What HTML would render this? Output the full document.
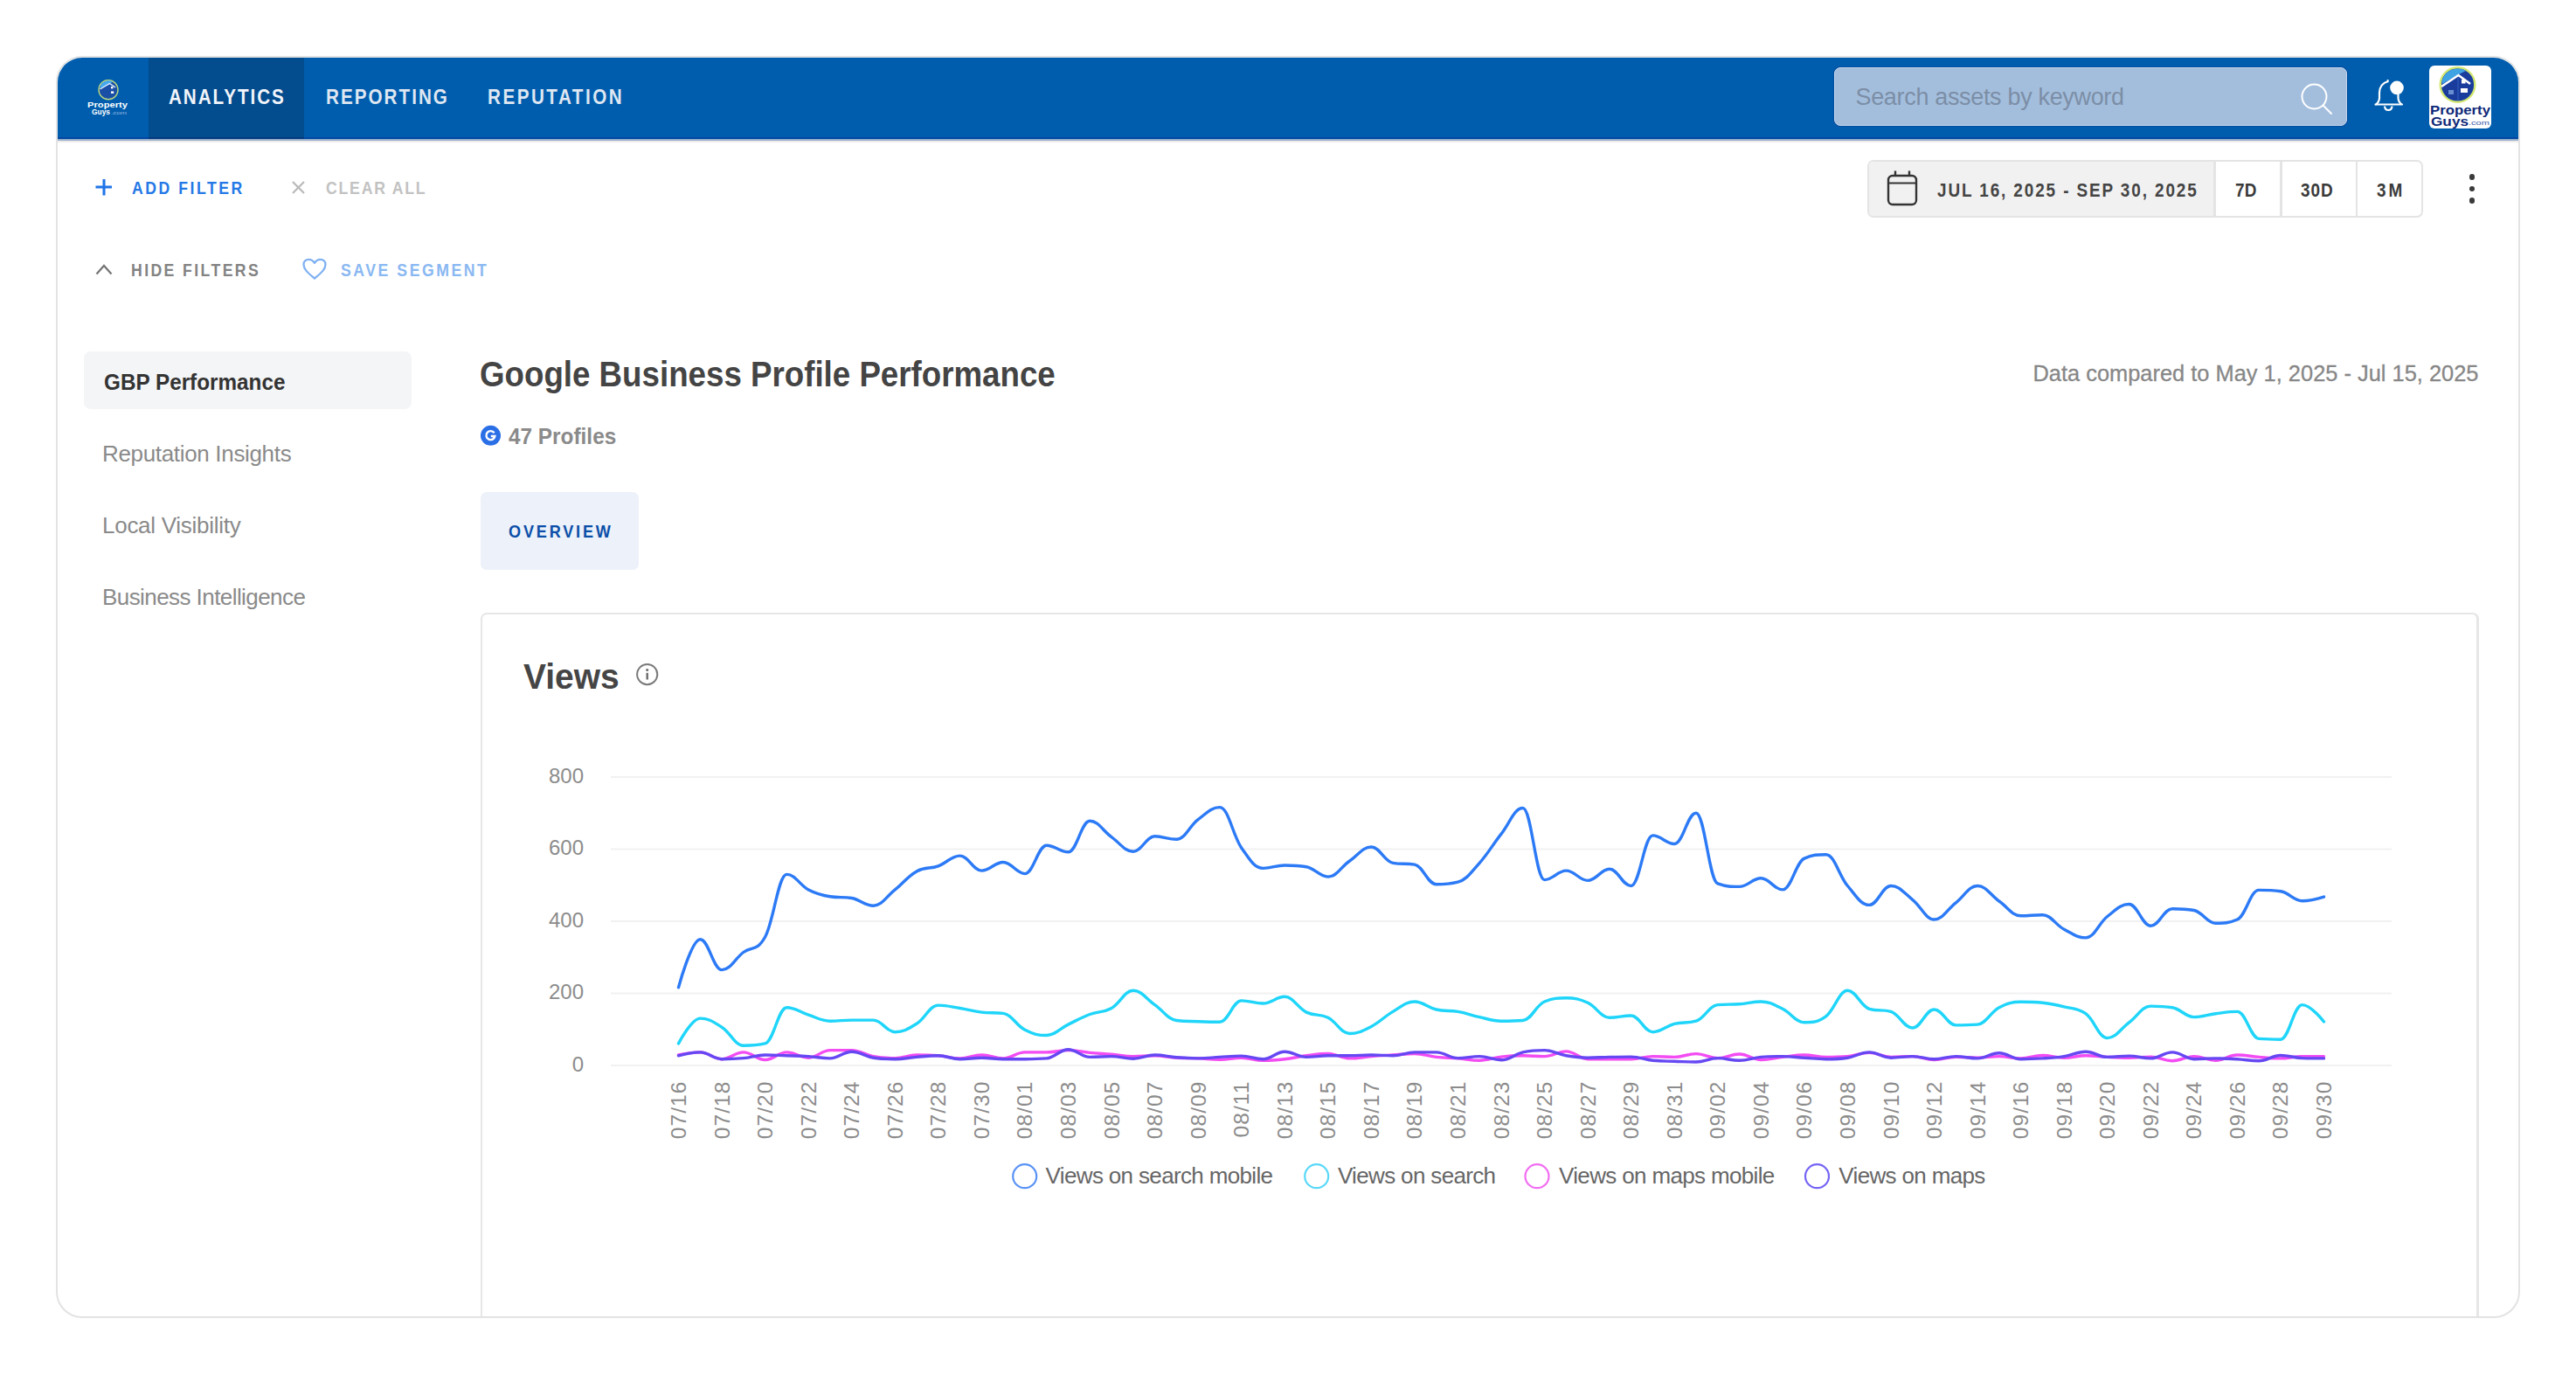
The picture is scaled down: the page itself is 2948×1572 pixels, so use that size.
<!DOCTYPE html>
<html><head><meta charset="utf-8">
<style>
html,body{margin:0;padding:0;background:#fff;}
body{width:2948px;height:1572px;overflow:hidden;position:relative;font-family:"Liberation Sans",sans-serif;}
.a{position:absolute;}
.t{position:absolute;white-space:nowrap;line-height:1;}
#card{position:absolute;left:64px;top:64px;width:2820px;height:1444px;box-sizing:border-box;border:2px solid #e3e3e3;border-radius:30px;overflow:hidden;background:#fff;}
#root{position:absolute;left:-66px;top:-66px;width:2948px;height:1572px;}
</style></head>
<body>
<div id="card"><div id="root">
<!-- NAV -->
<div class="a" style="left:60px;top:60px;width:2830px;height:99px;background:#005dad;"></div>
<div class="a" style="left:170px;top:60px;width:178px;height:99px;background:#034c8e;"></div>
<div class="a" style="left:60px;top:157px;width:2830px;height:2px;background:#0046a3;"></div>
<div class="a" style="left:170px;top:157px;width:178px;height:2px;background:#03397f;"></div>
<div class="a" style="left:60px;top:159px;width:2830px;height:2px;background:#98afc9;"></div>
<div class="a" style="left:60px;top:161px;width:2830px;height:2px;background:#efedec;"></div>
<!-- logo -->
<svg class="a" style="left:96px;top:86px" width="56" height="50" viewBox="0 0 56 50">
  <circle cx="28" cy="16.7" r="11" fill="#1a4fa6" stroke="#b9d77f" stroke-width="1.4"/>
  <path d="M18.5 13 A10.4 10.4 0 0 1 33 7.5 L29 10.5 L19 15 Z" fill="#45a8ee"/>
  <path d="M18.5 16 L29.5 9.5 L36 14" fill="none" stroke="#e8f4ff" stroke-width="1.4"/>
  <rect x="31" y="13" width="2.4" height="2.4" fill="#fff"/>
  <rect x="31" y="18.5" width="3.2" height="2.4" fill="#fff"/>
  <text x="4" y="37.2" textLength="46" lengthAdjust="spacingAndGlyphs" font-family="Liberation Sans" font-weight="bold" font-size="9.5" fill="#fff">Property</text>
  <text x="9" y="45.3" textLength="21" lengthAdjust="spacingAndGlyphs" font-family="Liberation Sans" font-weight="bold" font-size="9" fill="#fff">Guys</text>
  <text x="31" y="45" textLength="18" lengthAdjust="spacingAndGlyphs" font-family="Liberation Sans" font-size="6" fill="#9bbbe3">.com</text>
</svg>
<div id="t_analytics" class="t" style="left:192.5px;top:99.0px;font-size:24px;font-weight:bold;color:#f2f5fa;letter-spacing:2.26px;transform:scaleX(0.86);transform-origin:0 0;">ANALYTICS</div>
<div id="t_reporting" class="t" style="left:373.0px;top:99.0px;font-size:24px;font-weight:bold;color:#dfe7f2;letter-spacing:2.35px;transform:scaleX(0.86);transform-origin:0 0;">REPORTING</div>
<div id="t_reputation" class="t" style="left:558.0px;top:99.0px;font-size:24px;font-weight:bold;color:#dfe7f2;letter-spacing:2.91px;transform:scaleX(0.86);transform-origin:0 0;">REPUTATION</div>
<!-- search -->
<div class="a" style="left:2099px;top:77px;width:587px;height:67px;box-sizing:border-box;background:#a3bedd;border:1px solid #c3d4ea;border-radius:7px;box-shadow:0 0 0 1px #004b9f;"></div>
<div id="t_search" class="t" style="left:2123.5px;top:98.0px;font-size:27px;color:#7c8ea6;letter-spacing:-0.33px;">Search assets by keyword</div>
<svg class="a" style="left:2626px;top:88px" width="50" height="50" viewBox="0 0 50 50">
  <circle cx="22.5" cy="22.5" r="14" fill="none" stroke="#fff" stroke-width="2"/>
  <line x1="32.5" y1="32.5" x2="42" y2="42" stroke="#fff" stroke-width="2" stroke-linecap="round"/>
</svg>
<!-- bell -->
<svg class="a" style="left:2710px;top:86px" width="50" height="50" viewBox="0 0 50 50">
  <path d="M8.5 33.5 L39 33.5" stroke="#fff" stroke-width="2.2" stroke-linecap="round"/>
  <path d="M9 33.5 C11.5 31.5 13 29.5 13 26 L13 20 C13 13.5 17 8.5 22.6 7.2 L22.6 6" fill="none" stroke="#fff" stroke-width="2.2" stroke-linecap="round"/>
  <path d="M34.5 22 L34.5 26 C34.5 29.5 36 31.5 38.5 33.5" fill="none" stroke="#fff" stroke-width="2.2"/>
  <path d="M19 35.5 C19.5 41.5 27 41.5 27.5 35.5" fill="none" stroke="#fff" stroke-width="2.2"/>
  <circle cx="33" cy="14.4" r="7.8" fill="#fff"/>
</svg>
<!-- avatar -->
<div class="a" style="left:2780px;top:75px;width:71px;height:72px;background:#fff;border-radius:6px;overflow:hidden;">
<svg width="71" height="72" viewBox="0 0 71 72">
  <circle cx="32.5" cy="22" r="19.8" fill="#1a3d9d" stroke="#d3e872" stroke-width="2.4"/>
  <path d="M14.5 18 A18.6 18.6 0 0 1 42 6 L32 11 L15 21 Z" fill="#3fa3e4"/>
  <path d="M14 24 L33.5 11 L47 21" fill="none" stroke="#fff" stroke-width="2.6"/>
  <rect x="37" y="16" width="4.5" height="4.5" fill="#fff"/>
  <rect x="36" y="26" width="8" height="5" fill="#fff"/>
  <rect x="22" y="28" width="6" height="5" fill="#6a8fd0"/>
  <line x1="33" y1="14" x2="33" y2="40" stroke="#2a56b5" stroke-width="1.5"/>
  <text x="1" y="56" textLength="69" lengthAdjust="spacingAndGlyphs" font-family="Liberation Sans" font-weight="bold" font-size="15.5" fill="#0e2877">Property</text>
  <text x="2" y="68.5" textLength="43" lengthAdjust="spacingAndGlyphs" font-family="Liberation Sans" font-weight="bold" font-size="15.5" fill="#0e2877">Guys</text>
  <text x="45" y="68" textLength="24" lengthAdjust="spacingAndGlyphs" font-family="Liberation Sans" font-size="8" fill="#3b5aa8">.com</text>
</svg>
</div>

<!-- plus -->
<svg class="a" style="left:105px;top:200px" width="28" height="28" viewBox="0 0 28 28">
  <line x1="14" y1="5" x2="14" y2="23.5" stroke="#1f74e8" stroke-width="3"/>
  <line x1="4.5" y1="14" x2="23" y2="14" stroke="#1f74e8" stroke-width="3"/>
</svg>
<div id="t_addfilter" class="t" style="left:151.0px;top:205.0px;font-size:20.5px;font-weight:bold;color:#2478e6;letter-spacing:2.95px;transform:scaleX(0.86);transform-origin:0 0;">ADD FILTER</div>
<svg class="a" style="left:330px;top:203px" width="24" height="24" viewBox="0 0 24 24">
  <line x1="5" y1="5" x2="18" y2="18" stroke="#b9b9b9" stroke-width="2.2"/>
  <line x1="18" y1="5" x2="5" y2="18" stroke="#b9b9b9" stroke-width="2.2"/>
</svg>
<div id="t_clearall" class="t" style="left:373.0px;top:205.0px;font-size:20.5px;font-weight:bold;color:#c2c2c2;letter-spacing:2.09px;transform:scaleX(0.86);transform-origin:0 0;">CLEAR ALL</div>
<!-- chevron -->
<svg class="a" style="left:105px;top:296px" width="28" height="24" viewBox="0 0 28 24">
  <path d="M5.5 17.5 L14 8 L22.5 17.5" fill="none" stroke="#747474" stroke-width="2.2"/>
</svg>
<div id="t_hidefilters" class="t" style="left:150.0px;top:298.5px;font-size:20.5px;font-weight:bold;color:#838383;letter-spacing:2.81px;transform:scaleX(0.86);transform-origin:0 0;">HIDE FILTERS</div>
<!-- heart -->
<svg class="a" style="left:342px;top:292px" width="36" height="32" viewBox="0 0 36 32">
  <path d="M18 26.5 C10 20 5.5 16 5.5 10.5 C5.5 7 8 4.8 11.5 4.8 C14.5 4.8 16.5 6.5 18 8.8 C19.5 6.5 21.5 4.8 24.5 4.8 C28 4.8 30.5 7 30.5 10.5 C30.5 16 26 20 18 26.5 Z" fill="none" stroke="#7eb0f2" stroke-width="2.3" stroke-linejoin="round"/>
</svg>
<div id="t_savesegment" class="t" style="left:390.0px;top:298.5px;font-size:20.5px;font-weight:bold;color:#8ab8f2;letter-spacing:2.96px;transform:scaleX(0.86);transform-origin:0 0;">SAVE SEGMENT</div>
<!-- date group -->
<div class="a" style="left:2137px;top:183px;width:636px;height:66px;box-sizing:border-box;border:2px solid #e4e4e4;border-radius:7px;background:#fff;overflow:hidden;">
  <div class="a" style="left:0;top:0;width:394px;height:62px;background:#f1f1f1;"></div>
  <div class="a" style="left:394px;top:0;width:3px;height:62px;background:#e4e4e4;"></div>
  <div class="a" style="left:470px;top:0;width:3px;height:62px;background:#e4e4e4;"></div>
  <div class="a" style="left:557px;top:0;width:2px;height:62px;background:#e4e4e4;"></div>
</div>
<svg class="a" style="left:2155px;top:190px" width="44" height="50" viewBox="0 0 44 50">
  <rect x="6" y="11" width="32" height="33" rx="5" fill="none" stroke="#333" stroke-width="2.4"/>
  <line x1="6" y1="19.5" x2="38" y2="19.5" stroke="#333" stroke-width="2.2"/>
  <line x1="14" y1="5.5" x2="14" y2="11" stroke="#333" stroke-width="2.4"/>
  <line x1="30" y1="5.5" x2="30" y2="11" stroke="#333" stroke-width="2.4"/>
</svg>
<div id="t_date" class="t" style="left:2216.5px;top:206.5px;font-size:22px;font-weight:bold;color:#444;letter-spacing:2.20px;transform:scaleX(0.86);transform-origin:0 0;">JUL 16, 2025 - SEP 30, 2025</div>
<div id="t_7d" class="t" style="left:2558.0px;top:206.5px;font-size:22px;letter-spacing:0.24px;font-weight:bold;color:#3a3a3a;transform:scaleX(0.86);transform-origin:0 0;">7D</div>
<div id="t_30d" class="t" style="left:2633.0px;top:206.5px;font-size:22px;letter-spacing:1.16px;font-weight:bold;color:#3a3a3a;transform:scaleX(0.86);transform-origin:0 0;">30D</div>
<div id="t_3m" class="t" style="left:2719.5px;top:206.5px;font-size:22px;letter-spacing:3.37px;font-weight:bold;color:#3a3a3a;transform:scaleX(0.86);transform-origin:0 0;">3M</div>
<div class="a" style="left:2825.5px;top:199px;width:6.6px;height:6.6px;border-radius:50%;background:#3a3a3a;"></div>
<div class="a" style="left:2825.5px;top:212.8px;width:6.6px;height:6.6px;border-radius:50%;background:#3a3a3a;"></div>
<div class="a" style="left:2825.5px;top:226.1px;width:6.6px;height:6.6px;border-radius:50%;background:#3a3a3a;"></div>

<div class="a" style="left:96px;top:402px;width:375px;height:66px;background:#f4f5f7;border-radius:8px;"></div>
<div id="t_gbp" class="t" style="left:119.0px;top:424.0px;font-size:26px;font-weight:bold;color:#333;transform:scaleX(0.9340);transform-origin:0 0;">GBP Performance</div>
<div id="t_repins" class="t" style="left:117.0px;top:506.0px;font-size:26px;color:#8a8a8a;letter-spacing:-0.33px;">Reputation Insights</div>
<div id="t_localvis" class="t" style="left:117.0px;top:587.5px;font-size:26px;color:#8a8a8a;letter-spacing:-0.27px;">Local Visibility</div>
<div id="t_busint" class="t" style="left:117.0px;top:670.0px;font-size:26px;color:#8a8a8a;letter-spacing:-0.57px;">Business Intelligence</div>

<div id="t_title" class="t" style="left:548.5px;top:407.5px;font-size:40.5px;font-weight:bold;color:#444;transform:scaleX(0.9062);transform-origin:0 0;">Google Business Profile Performance</div>
<div id="t_compared" class="t" style="left:2326.5px;top:414.5px;font-size:25.4px;color:#878787;-webkit-text-stroke-width:0.3px;letter-spacing:0.01px;">Data compared to May 1, 2025 - Jul 15, 2025</div>
<svg class="a" style="left:549px;top:486px" width="25" height="25" viewBox="0 0 25 25">
  <circle cx="12.5" cy="12.3" r="11.5" fill="#2a6fe6"/>
  <path d="M16.6 9.3 A5 5 0 1 0 17.4 13 L12.8 13" fill="none" stroke="#fff" stroke-width="2.4"/>
</svg>
<div id="t_profiles" class="t" style="left:581.5px;top:486.0px;font-size:26.5px;font-weight:bold;color:#8a8a8a;transform:scaleX(0.9193);transform-origin:0 0;">47 Profiles</div>
<div class="a" style="left:550px;top:563px;width:181px;height:89px;background:#ecf1fa;border-radius:7px;"></div>
<div id="t_overview" class="t" style="left:581.5px;top:597.0px;font-size:21px;font-weight:bold;color:#0b4fa8;letter-spacing:3.29px;transform:scaleX(0.86);transform-origin:0 0;">OVERVIEW</div>
<!-- chart card -->
<div class="a" style="left:550px;top:701px;width:2287px;height:820px;box-sizing:border-box;border:2px solid #e6e6e6;border-right-width:3px;border-radius:7px;"></div>
<div id="t_views" class="t" style="left:599.0px;top:754.0px;font-size:40px;font-weight:bold;color:#454545;transform:scaleX(0.9736);transform-origin:0 0;">Views</div>
<svg class="a" style="left:726px;top:757px" width="30" height="30" viewBox="0 0 30 30">
  <circle cx="14.7" cy="14.6" r="11.6" fill="none" stroke="#7a7a7a" stroke-width="2"/>
  <circle cx="14.7" cy="9.4" r="1.5" fill="#6a6a6a"/>
  <line x1="14.7" y1="12.8" x2="14.7" y2="20.5" stroke="#6a6a6a" stroke-width="2.4"/>
</svg>

<svg class="a" style="left:0;top:0" width="2948" height="1572" viewBox="0 0 2948 1572">
<line x1="699" y1="889.0" x2="2737" y2="889.0" stroke="#f1f1f1" stroke-width="2"/>
<line x1="699" y1="971.5" x2="2737" y2="971.5" stroke="#f1f1f1" stroke-width="2"/>
<line x1="699" y1="1054.0" x2="2737" y2="1054.0" stroke="#f1f1f1" stroke-width="2"/>
<line x1="699" y1="1136.5" x2="2737" y2="1136.5" stroke="#f1f1f1" stroke-width="2"/>
<line x1="699" y1="1219.0" x2="2737" y2="1219.0" stroke="#f1f1f1" stroke-width="2"/>
<text x="668" y="895.5" text-anchor="end" font-family="Liberation Sans" font-size="24" fill="#8c8c8c">800</text>
<text x="668" y="978.0" text-anchor="end" font-family="Liberation Sans" font-size="24" fill="#8c8c8c">600</text>
<text x="668" y="1060.5" text-anchor="end" font-family="Liberation Sans" font-size="24" fill="#8c8c8c">400</text>
<text x="668" y="1143.0" text-anchor="end" font-family="Liberation Sans" font-size="24" fill="#8c8c8c">200</text>
<text x="668" y="1225.5" text-anchor="end" font-family="Liberation Sans" font-size="24" fill="#8c8c8c">0</text>
<text transform="translate(776.5 1236.5) rotate(-90)" x="0" y="8.5" text-anchor="end" font-family="Liberation Sans" font-size="24.5" letter-spacing="1.1" fill="#8c8c8c">07/16</text>
<text transform="translate(826.1 1236.5) rotate(-90)" x="0" y="8.5" text-anchor="end" font-family="Liberation Sans" font-size="24.5" letter-spacing="1.1" fill="#8c8c8c">07/18</text>
<text transform="translate(875.6 1236.5) rotate(-90)" x="0" y="8.5" text-anchor="end" font-family="Liberation Sans" font-size="24.5" letter-spacing="1.1" fill="#8c8c8c">07/20</text>
<text transform="translate(925.2 1236.5) rotate(-90)" x="0" y="8.5" text-anchor="end" font-family="Liberation Sans" font-size="24.5" letter-spacing="1.1" fill="#8c8c8c">07/22</text>
<text transform="translate(974.7 1236.5) rotate(-90)" x="0" y="8.5" text-anchor="end" font-family="Liberation Sans" font-size="24.5" letter-spacing="1.1" fill="#8c8c8c">07/24</text>
<text transform="translate(1024.3 1236.5) rotate(-90)" x="0" y="8.5" text-anchor="end" font-family="Liberation Sans" font-size="24.5" letter-spacing="1.1" fill="#8c8c8c">07/26</text>
<text transform="translate(1073.8 1236.5) rotate(-90)" x="0" y="8.5" text-anchor="end" font-family="Liberation Sans" font-size="24.5" letter-spacing="1.1" fill="#8c8c8c">07/28</text>
<text transform="translate(1123.4 1236.5) rotate(-90)" x="0" y="8.5" text-anchor="end" font-family="Liberation Sans" font-size="24.5" letter-spacing="1.1" fill="#8c8c8c">07/30</text>
<text transform="translate(1172.9 1236.5) rotate(-90)" x="0" y="8.5" text-anchor="end" font-family="Liberation Sans" font-size="24.5" letter-spacing="1.1" fill="#8c8c8c">08/01</text>
<text transform="translate(1222.5 1236.5) rotate(-90)" x="0" y="8.5" text-anchor="end" font-family="Liberation Sans" font-size="24.5" letter-spacing="1.1" fill="#8c8c8c">08/03</text>
<text transform="translate(1272.0 1236.5) rotate(-90)" x="0" y="8.5" text-anchor="end" font-family="Liberation Sans" font-size="24.5" letter-spacing="1.1" fill="#8c8c8c">08/05</text>
<text transform="translate(1321.6 1236.5) rotate(-90)" x="0" y="8.5" text-anchor="end" font-family="Liberation Sans" font-size="24.5" letter-spacing="1.1" fill="#8c8c8c">08/07</text>
<text transform="translate(1371.1 1236.5) rotate(-90)" x="0" y="8.5" text-anchor="end" font-family="Liberation Sans" font-size="24.5" letter-spacing="1.1" fill="#8c8c8c">08/09</text>
<text transform="translate(1420.7 1236.5) rotate(-90)" x="0" y="8.5" text-anchor="end" font-family="Liberation Sans" font-size="24.5" letter-spacing="1.1" fill="#8c8c8c">08/11</text>
<text transform="translate(1470.2 1236.5) rotate(-90)" x="0" y="8.5" text-anchor="end" font-family="Liberation Sans" font-size="24.5" letter-spacing="1.1" fill="#8c8c8c">08/13</text>
<text transform="translate(1519.8 1236.5) rotate(-90)" x="0" y="8.5" text-anchor="end" font-family="Liberation Sans" font-size="24.5" letter-spacing="1.1" fill="#8c8c8c">08/15</text>
<text transform="translate(1569.3 1236.5) rotate(-90)" x="0" y="8.5" text-anchor="end" font-family="Liberation Sans" font-size="24.5" letter-spacing="1.1" fill="#8c8c8c">08/17</text>
<text transform="translate(1618.9 1236.5) rotate(-90)" x="0" y="8.5" text-anchor="end" font-family="Liberation Sans" font-size="24.5" letter-spacing="1.1" fill="#8c8c8c">08/19</text>
<text transform="translate(1668.4 1236.5) rotate(-90)" x="0" y="8.5" text-anchor="end" font-family="Liberation Sans" font-size="24.5" letter-spacing="1.1" fill="#8c8c8c">08/21</text>
<text transform="translate(1718.0 1236.5) rotate(-90)" x="0" y="8.5" text-anchor="end" font-family="Liberation Sans" font-size="24.5" letter-spacing="1.1" fill="#8c8c8c">08/23</text>
<text transform="translate(1767.5 1236.5) rotate(-90)" x="0" y="8.5" text-anchor="end" font-family="Liberation Sans" font-size="24.5" letter-spacing="1.1" fill="#8c8c8c">08/25</text>
<text transform="translate(1817.1 1236.5) rotate(-90)" x="0" y="8.5" text-anchor="end" font-family="Liberation Sans" font-size="24.5" letter-spacing="1.1" fill="#8c8c8c">08/27</text>
<text transform="translate(1866.6 1236.5) rotate(-90)" x="0" y="8.5" text-anchor="end" font-family="Liberation Sans" font-size="24.5" letter-spacing="1.1" fill="#8c8c8c">08/29</text>
<text transform="translate(1916.2 1236.5) rotate(-90)" x="0" y="8.5" text-anchor="end" font-family="Liberation Sans" font-size="24.5" letter-spacing="1.1" fill="#8c8c8c">08/31</text>
<text transform="translate(1965.7 1236.5) rotate(-90)" x="0" y="8.5" text-anchor="end" font-family="Liberation Sans" font-size="24.5" letter-spacing="1.1" fill="#8c8c8c">09/02</text>
<text transform="translate(2015.3 1236.5) rotate(-90)" x="0" y="8.5" text-anchor="end" font-family="Liberation Sans" font-size="24.5" letter-spacing="1.1" fill="#8c8c8c">09/04</text>
<text transform="translate(2064.9 1236.5) rotate(-90)" x="0" y="8.5" text-anchor="end" font-family="Liberation Sans" font-size="24.5" letter-spacing="1.1" fill="#8c8c8c">09/06</text>
<text transform="translate(2114.4 1236.5) rotate(-90)" x="0" y="8.5" text-anchor="end" font-family="Liberation Sans" font-size="24.5" letter-spacing="1.1" fill="#8c8c8c">09/08</text>
<text transform="translate(2164.0 1236.5) rotate(-90)" x="0" y="8.5" text-anchor="end" font-family="Liberation Sans" font-size="24.5" letter-spacing="1.1" fill="#8c8c8c">09/10</text>
<text transform="translate(2213.5 1236.5) rotate(-90)" x="0" y="8.5" text-anchor="end" font-family="Liberation Sans" font-size="24.5" letter-spacing="1.1" fill="#8c8c8c">09/12</text>
<text transform="translate(2263.1 1236.5) rotate(-90)" x="0" y="8.5" text-anchor="end" font-family="Liberation Sans" font-size="24.5" letter-spacing="1.1" fill="#8c8c8c">09/14</text>
<text transform="translate(2312.6 1236.5) rotate(-90)" x="0" y="8.5" text-anchor="end" font-family="Liberation Sans" font-size="24.5" letter-spacing="1.1" fill="#8c8c8c">09/16</text>
<text transform="translate(2362.2 1236.5) rotate(-90)" x="0" y="8.5" text-anchor="end" font-family="Liberation Sans" font-size="24.5" letter-spacing="1.1" fill="#8c8c8c">09/18</text>
<text transform="translate(2411.7 1236.5) rotate(-90)" x="0" y="8.5" text-anchor="end" font-family="Liberation Sans" font-size="24.5" letter-spacing="1.1" fill="#8c8c8c">09/20</text>
<text transform="translate(2461.3 1236.5) rotate(-90)" x="0" y="8.5" text-anchor="end" font-family="Liberation Sans" font-size="24.5" letter-spacing="1.1" fill="#8c8c8c">09/22</text>
<text transform="translate(2510.8 1236.5) rotate(-90)" x="0" y="8.5" text-anchor="end" font-family="Liberation Sans" font-size="24.5" letter-spacing="1.1" fill="#8c8c8c">09/24</text>
<text transform="translate(2560.4 1236.5) rotate(-90)" x="0" y="8.5" text-anchor="end" font-family="Liberation Sans" font-size="24.5" letter-spacing="1.1" fill="#8c8c8c">09/26</text>
<text transform="translate(2609.9 1236.5) rotate(-90)" x="0" y="8.5" text-anchor="end" font-family="Liberation Sans" font-size="24.5" letter-spacing="1.1" fill="#8c8c8c">09/28</text>
<text transform="translate(2659.5 1236.5) rotate(-90)" x="0" y="8.5" text-anchor="end" font-family="Liberation Sans" font-size="24.5" letter-spacing="1.1" fill="#8c8c8c">09/30</text>
<path d="M776.5 1207.0 C776.5 1207.0 791.4 1203.9 801.3 1203.9 C811.2 1203.9 816.1 1211.7 826.1 1211.7 C836.0 1211.7 840.9 1203.9 850.8 1203.9 C860.7 1203.9 865.7 1212.5 875.6 1212.5 C885.5 1212.5 890.5 1203.9 900.4 1203.9 C910.3 1203.9 915.2 1210.2 925.2 1210.2 C935.1 1210.2 940.0 1201.6 949.9 1201.6 C959.8 1201.6 964.8 1201.6 974.7 1201.6 C984.6 1201.6 989.6 1206.8 999.5 1208.6 C1009.4 1210.4 1014.3 1210.6 1024.3 1210.6 C1034.2 1210.6 1039.1 1207.0 1049.0 1207.0 C1058.9 1207.0 1063.9 1207.0 1073.8 1207.8 C1083.7 1208.6 1088.7 1210.9 1098.6 1210.9 C1108.5 1210.9 1113.5 1207.0 1123.4 1207.0 C1133.3 1207.0 1138.2 1210.9 1148.1 1210.9 C1158.1 1210.9 1163.0 1203.9 1172.9 1203.9 C1182.8 1203.9 1187.8 1203.9 1197.7 1203.9 C1207.6 1203.9 1212.6 1201.6 1222.5 1201.6 C1232.4 1201.6 1237.3 1203.5 1247.2 1204.4 C1257.2 1205.3 1262.1 1205.5 1272.0 1206.3 C1281.9 1207.1 1286.9 1208.6 1296.8 1208.6 C1306.7 1208.6 1311.7 1207.8 1321.6 1207.8 C1331.5 1207.8 1336.4 1209.6 1346.3 1210.2 C1356.3 1210.8 1361.2 1210.5 1371.1 1210.9 C1381.0 1211.3 1386.0 1212.2 1395.9 1212.2 C1405.8 1212.2 1410.8 1210.2 1420.7 1210.2 C1430.6 1210.2 1435.5 1213.3 1445.5 1213.3 C1455.4 1213.3 1460.3 1212.8 1470.2 1211.7 C1480.1 1210.6 1485.1 1209.0 1495.0 1207.8 C1504.9 1206.6 1509.9 1205.5 1519.8 1205.5 C1529.7 1205.5 1534.6 1210.9 1544.6 1210.9 C1554.5 1210.9 1559.4 1209.4 1569.3 1208.6 C1579.2 1207.8 1584.2 1207.6 1594.1 1207.0 C1604.0 1206.4 1609.0 1205.5 1618.9 1205.5 C1628.8 1205.5 1633.7 1208.3 1643.7 1209.4 C1653.6 1210.5 1658.5 1210.1 1668.4 1210.9 C1678.3 1211.7 1683.3 1213.3 1693.2 1213.3 C1703.1 1213.3 1708.1 1210.2 1718.0 1209.1 C1727.9 1208.0 1732.9 1207.8 1742.8 1207.8 C1752.7 1207.8 1757.6 1208.6 1767.5 1208.6 C1777.5 1208.6 1782.4 1202.9 1792.3 1202.9 C1802.2 1202.9 1807.2 1211.7 1817.1 1211.7 C1827.0 1211.7 1832.0 1211.7 1841.9 1211.7 C1851.8 1211.7 1856.7 1211.7 1866.6 1211.7 C1876.6 1211.7 1881.5 1208.6 1891.4 1208.6 C1901.3 1208.6 1906.3 1209.4 1916.2 1209.4 C1926.1 1209.4 1931.1 1205.6 1941.0 1205.6 C1950.9 1205.6 1955.8 1210.6 1965.7 1210.6 C1975.7 1210.6 1980.6 1206.0 1990.5 1206.0 C2000.4 1206.0 2005.4 1212.5 2015.3 1212.5 C2025.2 1212.5 2030.2 1210.5 2040.1 1209.4 C2050.0 1208.3 2054.9 1207.0 2064.9 1207.0 C2074.8 1207.0 2079.7 1209.4 2089.6 1209.4 C2099.5 1209.4 2104.5 1209.4 2114.4 1208.6 C2124.3 1207.8 2129.3 1204.4 2139.2 1204.4 C2149.1 1204.4 2154.0 1209.4 2164.0 1209.4 C2173.9 1209.4 2178.8 1208.6 2188.7 1208.6 C2198.6 1208.6 2203.6 1212.5 2213.5 1212.5 C2223.4 1212.5 2228.4 1209.4 2238.3 1209.4 C2248.2 1209.4 2253.1 1210.2 2263.1 1210.2 C2273.0 1210.2 2277.9 1208.6 2287.8 1208.6 C2297.7 1208.6 2302.7 1211.0 2312.6 1211.0 C2322.5 1211.0 2327.5 1207.5 2337.4 1207.5 C2347.3 1207.5 2352.3 1210.2 2362.2 1210.2 C2372.1 1210.2 2377.0 1207.8 2386.9 1207.8 C2396.9 1207.8 2401.8 1208.9 2411.7 1209.4 C2421.6 1209.9 2426.6 1210.2 2436.5 1210.2 C2446.4 1210.2 2451.4 1209.1 2461.3 1209.1 C2471.2 1209.1 2476.1 1213.7 2486.0 1213.7 C2496.0 1213.7 2500.9 1208.6 2510.8 1208.6 C2520.7 1208.6 2525.7 1213.3 2535.6 1213.3 C2545.5 1213.3 2550.5 1207.0 2560.4 1207.0 C2570.3 1207.0 2575.2 1208.6 2585.1 1209.4 C2595.1 1210.2 2600.0 1210.9 2609.9 1210.9 C2619.8 1210.9 2624.8 1208.6 2634.7 1208.6 C2644.6 1208.6 2659.5 1208.6 2659.5 1208.6" fill="none" stroke="#f24cf2" stroke-width="3.4" stroke-linejoin="round" stroke-linecap="round"/>
<path d="M776.5 1207.8 C776.5 1207.8 791.4 1203.9 801.3 1203.9 C811.2 1203.9 816.1 1211.7 826.1 1211.7 C836.0 1211.7 840.9 1211.5 850.8 1210.6 C860.7 1209.7 865.7 1207.0 875.6 1207.0 C885.5 1207.0 890.5 1207.5 900.4 1207.8 C910.3 1208.1 915.2 1208.0 925.2 1208.6 C935.1 1209.2 940.0 1210.9 949.9 1210.9 C959.8 1210.9 964.8 1203.2 974.7 1203.2 C984.6 1203.2 989.6 1208.7 999.5 1210.2 C1009.4 1211.7 1014.3 1211.7 1024.3 1211.7 C1034.2 1211.7 1039.1 1210.2 1049.0 1209.4 C1058.9 1208.6 1063.9 1207.8 1073.8 1207.8 C1083.7 1207.8 1088.7 1211.7 1098.6 1211.7 C1108.5 1211.7 1113.5 1210.2 1123.4 1210.2 C1133.3 1210.2 1138.2 1211.7 1148.1 1211.7 C1158.1 1211.7 1163.0 1211.7 1172.9 1211.7 C1182.8 1211.7 1187.8 1211.7 1197.7 1210.9 C1207.6 1210.1 1212.6 1200.8 1222.5 1200.8 C1232.4 1200.8 1237.3 1209.4 1247.2 1209.4 C1257.2 1209.4 1262.1 1208.6 1272.0 1208.6 C1281.9 1208.6 1286.9 1211.2 1296.8 1211.2 C1306.7 1211.2 1311.7 1207.0 1321.6 1207.0 C1331.5 1207.0 1336.4 1209.0 1346.3 1209.8 C1356.3 1210.6 1361.2 1210.9 1371.1 1210.9 C1381.0 1210.9 1386.0 1210.0 1395.9 1209.4 C1405.8 1208.8 1410.8 1208.1 1420.7 1208.1 C1430.6 1208.1 1435.5 1211.7 1445.5 1211.7 C1455.4 1211.7 1460.3 1203.2 1470.2 1203.2 C1480.1 1203.2 1485.1 1209.4 1495.0 1209.4 C1504.9 1209.4 1509.9 1207.8 1519.8 1207.8 C1529.7 1207.8 1534.6 1207.8 1544.6 1207.8 C1554.5 1207.8 1559.4 1207.0 1569.3 1207.0 C1579.2 1207.0 1584.2 1207.8 1594.1 1207.8 C1604.0 1207.8 1609.0 1203.9 1618.9 1203.9 C1628.8 1203.9 1633.7 1203.9 1643.7 1203.9 C1653.6 1203.9 1658.5 1210.6 1668.4 1210.6 C1678.3 1210.6 1683.3 1208.6 1693.2 1208.6 C1703.1 1208.6 1708.1 1212.8 1718.0 1212.8 C1727.9 1212.8 1732.9 1206.1 1742.8 1203.9 C1752.7 1201.7 1757.6 1201.6 1767.5 1201.6 C1777.5 1201.6 1782.4 1206.1 1792.3 1207.8 C1802.2 1209.5 1807.2 1210.2 1817.1 1210.2 C1827.0 1210.2 1832.0 1209.6 1841.9 1209.4 C1851.8 1209.2 1856.7 1209.1 1866.6 1209.1 C1876.6 1209.1 1881.5 1212.3 1891.4 1213.3 C1901.3 1214.3 1906.3 1214.0 1916.2 1214.3 C1926.1 1214.6 1931.1 1215.0 1941.0 1215.0 C1950.9 1215.0 1955.8 1210.6 1965.7 1210.6 C1975.7 1210.6 1980.6 1213.3 1990.5 1213.3 C2000.4 1213.3 2005.4 1210.2 2015.3 1209.4 C2025.2 1208.6 2030.2 1208.6 2040.1 1208.6 C2050.0 1208.6 2054.9 1209.6 2064.9 1210.2 C2074.8 1210.8 2079.7 1211.7 2089.6 1211.7 C2099.5 1211.7 2104.5 1211.7 2114.4 1210.2 C2124.3 1208.7 2129.3 1203.9 2139.2 1203.9 C2149.1 1203.9 2154.0 1210.2 2164.0 1210.2 C2173.9 1210.2 2178.8 1208.6 2188.7 1208.6 C2198.6 1208.6 2203.6 1211.7 2213.5 1211.7 C2223.4 1211.7 2228.4 1208.6 2238.3 1208.6 C2248.2 1208.6 2253.1 1210.9 2263.1 1210.9 C2273.0 1210.9 2277.9 1204.7 2287.8 1204.7 C2297.7 1204.7 2302.7 1211.7 2312.6 1211.7 C2322.5 1211.7 2327.5 1211.5 2337.4 1210.9 C2347.3 1210.3 2352.3 1210.1 2362.2 1208.6 C2372.1 1207.1 2377.0 1203.2 2386.9 1203.2 C2396.9 1203.2 2401.8 1209.4 2411.7 1209.4 C2421.6 1209.4 2426.6 1208.1 2436.5 1208.1 C2446.4 1208.1 2451.4 1210.9 2461.3 1210.9 C2471.2 1210.9 2476.1 1203.9 2486.0 1203.9 C2496.0 1203.9 2500.9 1211.7 2510.8 1211.7 C2520.7 1211.7 2525.7 1210.9 2535.6 1210.9 C2545.5 1210.9 2550.5 1211.1 2560.4 1211.7 C2570.3 1212.3 2575.2 1213.7 2585.1 1213.7 C2595.1 1213.7 2600.0 1207.5 2609.9 1207.5 C2619.8 1207.5 2624.8 1210.3 2634.7 1210.6 C2644.6 1210.9 2659.5 1210.9 2659.5 1210.9" fill="none" stroke="#6648f3" stroke-width="3.4" stroke-linejoin="round" stroke-linecap="round"/>
<path d="M776.5 1193.9 C776.5 1193.9 791.4 1165.1 801.3 1165.1 C811.2 1165.1 816.1 1169.0 826.1 1175.2 C836.0 1181.4 840.9 1196.2 850.8 1196.2 C860.7 1196.2 865.7 1196.2 875.6 1193.9 C885.5 1191.6 890.5 1152.7 900.4 1152.7 C910.3 1152.7 915.2 1158.1 925.2 1161.2 C935.1 1164.3 940.0 1168.2 949.9 1168.2 C959.8 1168.2 964.8 1167.1 974.7 1167.1 C984.6 1167.1 989.6 1167.1 999.5 1167.1 C1009.4 1167.1 1014.3 1180.7 1024.3 1180.7 C1034.2 1180.7 1039.1 1177.4 1049.0 1171.3 C1058.9 1165.2 1063.9 1150.1 1073.8 1150.1 C1083.7 1150.1 1088.7 1151.9 1098.6 1153.5 C1108.5 1155.1 1113.5 1156.9 1123.4 1158.1 C1133.3 1159.3 1138.2 1158.1 1148.1 1159.4 C1158.1 1160.7 1163.0 1173.3 1172.9 1178.3 C1182.8 1183.3 1187.8 1184.5 1197.7 1184.5 C1207.6 1184.5 1212.6 1176.9 1222.5 1172.1 C1232.4 1167.3 1237.3 1164.2 1247.2 1160.5 C1257.2 1156.8 1262.1 1158.9 1272.0 1153.5 C1281.9 1148.1 1286.9 1133.3 1296.8 1133.3 C1306.7 1133.3 1311.7 1142.8 1321.6 1149.6 C1331.5 1156.4 1336.4 1166.3 1346.3 1167.5 C1356.3 1168.7 1361.2 1168.3 1371.1 1168.7 C1381.0 1169.1 1386.0 1169.3 1395.9 1169.3 C1405.8 1169.3 1410.8 1144.9 1420.7 1144.9 C1430.6 1144.9 1435.5 1148.0 1445.5 1148.0 C1455.4 1148.0 1460.3 1140.3 1470.2 1140.3 C1480.1 1140.3 1485.1 1153.3 1495.0 1158.1 C1504.9 1162.9 1509.9 1159.4 1519.8 1164.3 C1529.7 1169.2 1534.6 1182.5 1544.6 1182.5 C1554.5 1182.5 1559.4 1179.4 1569.3 1174.4 C1579.2 1169.4 1584.2 1163.1 1594.1 1157.4 C1604.0 1151.7 1609.0 1146.0 1618.9 1146.0 C1628.8 1146.0 1633.7 1152.7 1643.7 1155.0 C1653.6 1157.3 1658.5 1155.7 1668.4 1157.4 C1678.3 1159.1 1683.3 1161.4 1693.2 1163.6 C1703.1 1165.8 1708.1 1168.2 1718.0 1168.2 C1727.9 1168.2 1732.9 1168.2 1742.8 1167.5 C1752.7 1166.8 1757.6 1150.2 1767.5 1146.0 C1777.5 1141.8 1782.4 1141.8 1792.3 1141.8 C1802.2 1141.8 1807.2 1142.8 1817.1 1147.3 C1827.0 1151.8 1832.0 1164.3 1841.9 1164.3 C1851.8 1164.3 1856.7 1162.0 1866.6 1162.0 C1876.6 1162.0 1881.5 1180.7 1891.4 1180.7 C1901.3 1180.7 1906.3 1173.8 1916.2 1171.3 C1926.1 1168.8 1931.1 1171.3 1941.0 1168.2 C1950.9 1165.1 1955.8 1150.4 1965.7 1149.6 C1975.7 1148.8 1980.6 1149.5 1990.5 1148.8 C2000.4 1148.1 2005.4 1146.0 2015.3 1146.0 C2025.2 1146.0 2030.2 1149.5 2040.1 1154.3 C2050.0 1159.1 2054.9 1169.8 2064.9 1169.8 C2074.8 1169.8 2079.7 1169.8 2089.6 1162.8 C2099.5 1155.8 2104.5 1133.3 2114.4 1133.3 C2124.3 1133.3 2129.3 1151.2 2139.2 1154.3 C2149.1 1157.4 2154.0 1154.3 2164.0 1157.4 C2173.9 1160.5 2178.8 1176.0 2188.7 1176.0 C2198.6 1176.0 2203.6 1155.0 2213.5 1155.0 C2223.4 1155.0 2228.4 1172.9 2238.3 1172.9 C2248.2 1172.9 2253.1 1172.9 2263.1 1172.1 C2273.0 1171.3 2277.9 1157.9 2287.8 1152.7 C2297.7 1147.5 2302.7 1146.3 2312.6 1146.3 C2322.5 1146.3 2327.5 1146.3 2337.4 1147.3 C2347.3 1148.3 2352.3 1149.4 2362.2 1151.9 C2372.1 1154.4 2377.0 1152.6 2386.9 1159.7 C2396.9 1166.8 2401.8 1187.6 2411.7 1187.6 C2421.6 1187.6 2426.6 1177.1 2436.5 1169.8 C2446.4 1162.5 2451.4 1151.1 2461.3 1151.1 C2471.2 1151.1 2476.1 1151.1 2486.0 1152.7 C2496.0 1154.3 2500.9 1163.6 2510.8 1163.6 C2520.7 1163.6 2525.7 1160.9 2535.6 1159.7 C2545.5 1158.5 2550.5 1157.4 2560.4 1157.4 C2570.3 1157.4 2575.2 1187.6 2585.1 1188.4 C2595.1 1189.2 2600.0 1189.2 2609.9 1189.2 C2619.8 1189.2 2624.8 1149.6 2634.7 1149.6 C2644.6 1149.6 2659.5 1169.0 2659.5 1169.0" fill="none" stroke="#1fd5fa" stroke-width="3.4" stroke-linejoin="round" stroke-linecap="round"/>
<path d="M776.5 1129.7 C776.5 1129.7 791.4 1074.7 801.3 1074.7 C811.2 1074.7 816.1 1109.6 826.1 1109.6 C836.0 1109.6 840.9 1097.0 850.8 1089.5 C860.7 1082.0 865.7 1089.5 875.6 1072.0 C885.5 1054.5 890.5 1000.4 900.4 1000.4 C910.3 1000.4 915.2 1012.8 925.2 1017.9 C935.1 1023.0 940.0 1024.1 949.9 1025.8 C959.8 1027.5 964.8 1025.8 974.7 1027.5 C984.6 1029.2 989.6 1036.2 999.5 1036.2 C1009.4 1036.2 1014.3 1025.8 1024.3 1017.9 C1034.2 1010.0 1039.1 1002.3 1049.0 996.9 C1058.9 991.5 1063.9 994.4 1073.8 990.8 C1083.7 987.2 1088.7 979.1 1098.6 979.1 C1108.5 979.1 1113.5 996.1 1123.4 996.1 C1133.3 996.1 1138.2 986.5 1148.1 986.5 C1158.1 986.5 1163.0 999.6 1172.9 999.6 C1182.8 999.6 1187.8 967.2 1197.7 967.2 C1207.6 967.2 1212.6 974.8 1222.5 974.8 C1232.4 974.8 1237.3 939.3 1247.2 939.3 C1257.2 939.3 1262.1 950.6 1272.0 957.6 C1281.9 964.6 1286.9 974.2 1296.8 974.2 C1306.7 974.2 1311.7 956.8 1321.6 956.8 C1331.5 956.8 1336.4 960.3 1346.3 960.3 C1356.3 960.3 1361.2 944.9 1371.1 937.6 C1381.0 930.3 1386.0 923.6 1395.9 923.6 C1405.8 923.6 1410.8 955.9 1420.7 969.9 C1430.6 983.9 1435.5 993.4 1445.5 993.4 C1455.4 993.4 1460.3 990.0 1470.2 990.0 C1480.1 990.0 1485.1 990.0 1495.0 991.7 C1504.9 993.4 1509.9 1003.1 1519.8 1003.1 C1529.7 1003.1 1534.6 991.8 1544.6 985.0 C1554.5 978.2 1559.4 969.0 1569.3 969.0 C1579.2 969.0 1584.2 985.5 1594.1 987.3 C1604.0 989.1 1609.0 987.3 1618.9 989.1 C1628.8 990.9 1633.7 1011.8 1643.7 1011.8 C1653.6 1011.8 1658.5 1011.8 1668.4 1009.2 C1678.3 1006.6 1683.3 998.3 1693.2 987.3 C1703.1 976.3 1708.1 966.7 1718.0 954.1 C1727.9 941.5 1732.9 924.5 1742.8 924.5 C1752.7 924.5 1757.6 1006.6 1767.5 1006.6 C1777.5 1006.6 1782.4 996.1 1792.3 996.1 C1802.2 996.1 1807.2 1007.4 1817.1 1007.4 C1827.0 1007.4 1832.0 994.3 1841.9 994.3 C1851.8 994.3 1856.7 1013.5 1866.6 1013.5 C1876.6 1013.5 1881.5 955.9 1891.4 955.9 C1901.3 955.9 1906.3 965.5 1916.2 965.5 C1926.1 965.5 1931.1 930.2 1941.0 930.2 C1950.9 930.2 1955.8 1007.4 1965.7 1010.9 C1975.7 1014.4 1980.6 1014.4 1990.5 1014.4 C2000.4 1014.4 2005.4 1004.8 2015.3 1004.8 C2025.2 1004.8 2030.2 1017.9 2040.1 1017.9 C2050.0 1017.9 2054.9 986.5 2064.9 982.1 C2074.8 977.7 2079.7 977.7 2089.6 977.7 C2099.5 977.7 2104.5 1002.0 2114.4 1013.5 C2124.3 1025.0 2129.3 1035.4 2139.2 1035.4 C2149.1 1035.4 2154.0 1013.5 2164.0 1013.5 C2173.9 1013.5 2178.8 1021.6 2188.7 1029.3 C2198.6 1037.0 2203.6 1052.0 2213.5 1052.0 C2223.4 1052.0 2228.4 1040.5 2238.3 1032.8 C2248.2 1025.1 2253.1 1013.5 2263.1 1013.5 C2273.0 1013.5 2277.9 1024.1 2287.8 1031.0 C2297.7 1037.9 2302.7 1047.8 2312.6 1047.8 C2322.5 1047.8 2327.5 1046.7 2337.4 1046.7 C2347.3 1046.7 2352.3 1058.1 2362.2 1063.3 C2372.1 1068.5 2377.0 1072.9 2386.9 1072.9 C2396.9 1072.9 2401.8 1056.2 2411.7 1048.5 C2421.6 1040.8 2426.6 1034.5 2436.5 1034.5 C2446.4 1034.5 2451.4 1059.3 2461.3 1059.3 C2471.2 1059.3 2476.1 1039.7 2486.0 1039.7 C2496.0 1039.7 2500.9 1039.7 2510.8 1041.5 C2520.7 1043.3 2525.7 1056.3 2535.6 1056.3 C2545.5 1056.3 2550.5 1056.3 2560.4 1052.0 C2570.3 1047.7 2575.2 1018.4 2585.1 1018.4 C2595.1 1018.4 2600.0 1018.4 2609.9 1019.7 C2619.8 1021.0 2624.8 1030.7 2634.7 1030.7 C2644.6 1030.7 2659.5 1026.1 2659.5 1026.1" fill="none" stroke="#2c7af6" stroke-width="3.4" stroke-linejoin="round" stroke-linecap="round"/>
<circle cx="1172.7" cy="1345.7" r="13.5" fill="none" stroke="#5a93f6" stroke-width="2.2"/>
<text x="1196.6" y="1354" font-family="Liberation Sans" font-size="26" letter-spacing="-0.65" fill="#666">Views on search mobile</text>
<circle cx="1506.7" cy="1345.7" r="13.5" fill="none" stroke="#5ad8f8" stroke-width="2.2"/>
<text x="1530.9" y="1354" font-family="Liberation Sans" font-size="26" letter-spacing="-0.65" fill="#666">Views on search</text>
<circle cx="1759.0" cy="1345.7" r="13.5" fill="none" stroke="#f26ef2" stroke-width="2.2"/>
<text x="1784.0" y="1354" font-family="Liberation Sans" font-size="26" letter-spacing="-0.65" fill="#666">Views on maps mobile</text>
<circle cx="2079.5" cy="1345.7" r="13.5" fill="none" stroke="#7565f5" stroke-width="2.2"/>
<text x="2104.3" y="1354" font-family="Liberation Sans" font-size="26" letter-spacing="-0.65" fill="#666">Views on maps</text>
</svg>
</div></div>
</body></html>
